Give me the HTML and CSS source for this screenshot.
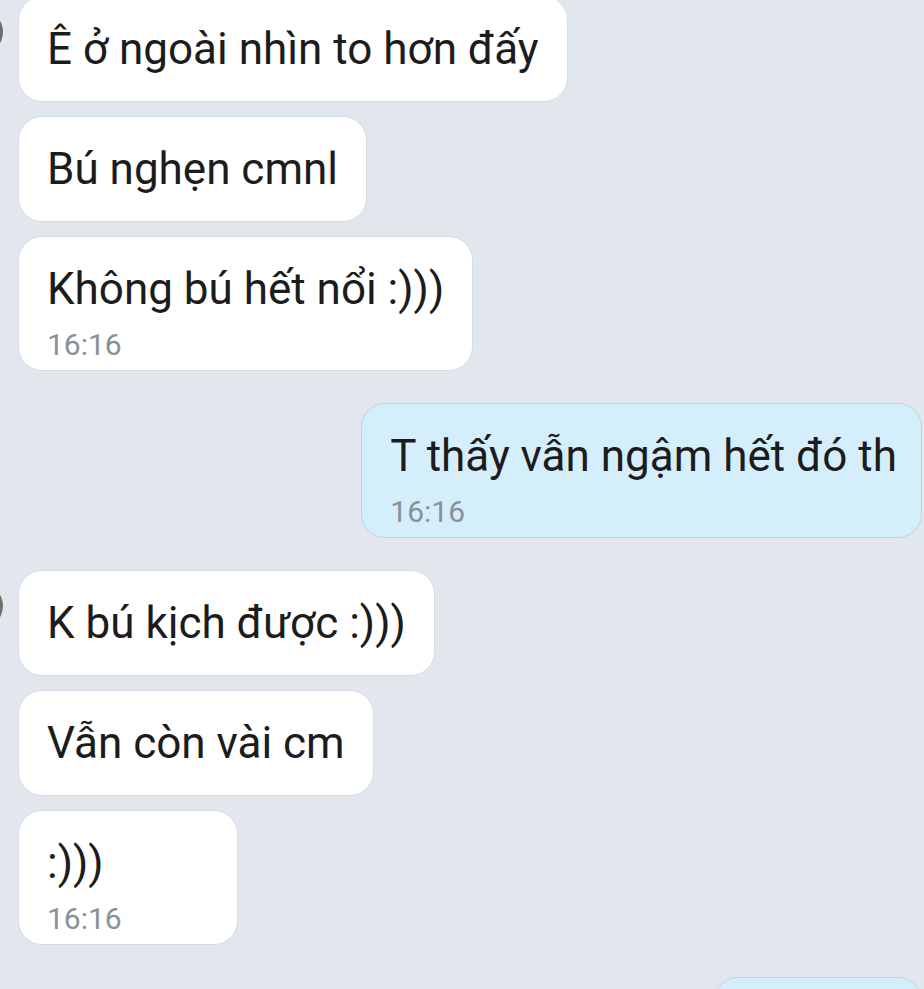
FILE: index.html
```html
<!DOCTYPE html>
<html lang="vi">
<head>
<meta charset="utf-8">
<title>Chat</title>
<link rel="stylesheet" href="styles.css">
</head>
<body>
<div class="chat">
  <div class="group incoming">
    <span class="avatar"></span>
    <div class="bubble">Ê ở ngoài nhìn to hơn đấy</div>
    <div class="bubble">Bú nghẹn cmnl</div>
    <div class="bubble timed">Không bú hết nổi :)))<div class="time">16:16</div></div>
  </div>
  <div class="group outgoing">
    <div class="bubble mine timed">T thấy vẫn ngậm hết đó th<div class="time">16:16</div></div>
  </div>
  <div class="group incoming">
    <span class="avatar"></span>
    <div class="bubble">K bú kịch được :)))</div>
    <div class="bubble">Vẫn còn vài cm</div>
    <div class="bubble timed">:)))<div class="time">16:16</div></div>
  </div>
  <div class="group outgoing">
    <div class="bubble mine stub"></div>
  </div>
</div>
</body>
</html>
```

FILE: styles.css
```css
html, body {
  margin: 0;
  padding: 0;
  background: #e2e7ee;
  overflow: hidden;
}
body {
  width: 924px;
  height: 989px;
  font-family: Roboto, "Noto Sans", sans-serif;
  color: #1c1c1c;
}
.chat {
  display: flex;
  flex-direction: column;
  gap: 32px;
  margin-top: -4px;
}
.group {
  position: relative;
  display: flex;
  flex-direction: column;
  gap: 14px;
}
.incoming {
  align-items: flex-start;
  padding-left: 18px;
}
.outgoing {
  align-items: flex-end;
  padding-right: 2px;
}
.avatar {
  position: absolute;
  left: -43px;
  top: 13px;
  width: 46px;
  height: 46px;
  border-radius: 50%;
  background: #6f6e66;
}
.bubble {
  box-sizing: border-box;
  background: #ffffff;
  border: 1px solid #d6dce4;
  border-radius: 24px;
  padding: 26px 28px;
  font-size: 44px;
  line-height: 52px;
  white-space: nowrap;
}
.bubble.timed {
  min-width: 220px;
  padding-bottom: 7px;
}
.bubble.mine {
  background: #d5eefc;
  border-color: #bdd4e6;
  padding-right: 24px;
}
.time {
  margin-top: 12px;
  font-size: 30px;
  line-height: 36px;
  color: #88919a;
}
.stub {
  width: 208px;
  height: 60px;
  padding: 0;
}
```
